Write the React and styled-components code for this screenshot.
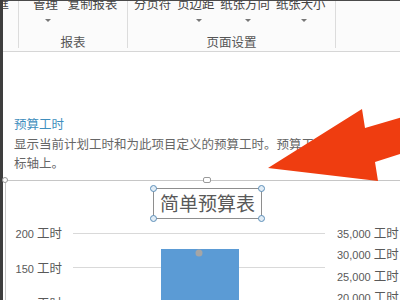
import React from "react";
import styled, { createGlobalStyle } from "styled-components";

const Global = createGlobalStyle`
  html, body { margin: 0; padding: 0; background: #fff; overflow: hidden; }
  #root { width: 400px; height: 300px; }
`;

const Page = styled.div`
  position: relative;
  display: flex;
  width: 400px;
  height: 300px;
  overflow: hidden;
  background: #fff;
  font-family: "Noto Sans CJK SC", "Noto Sans", sans-serif;
`;

const LeftStrip = styled.div`
  width: 3px;
  flex: none;
  background: #3e3e3e;
`;

const Main = styled.div`
  flex: 1;
  min-width: 0;
  display: flex;
  flex-direction: column;
`;

const Ribbon = styled.div`
  flex: none;
  display: flex;
  height: 52px;
  box-sizing: border-box;
  border-top: 1px solid #4a4a4a;
  border-bottom: 1px solid #d6d6d6;
  background: #fbfbfb;
`;

const Group = styled.div`
  width: ${(p) => p.$w}px;
  flex: none;
  display: flex;
  flex-direction: column;
  overflow: hidden;
`;

const ButtonRow = styled.div`
  display: flex;
  gap: ${(p) => p.$gap}px;
  margin-top: -4px;
  padding-left: ${(p) => p.$pl}px;
  justify-content: ${(p) => p.$justify || "flex-start"};
  padding-right: ${(p) => p.$pr || 0}px;
`;

const RibbonButton = styled.div`
  display: flex;
  flex-direction: column;
  align-items: center;
`;

const ButtonLabel = styled.span`
  font-size: 12.4px;
  line-height: 14px;
  color: #444;
  white-space: nowrap;
`;

const Caret = styled.span`
  margin-top: 8px;
  margin-left: 6px;
  width: 0;
  height: 0;
  border-left: 3px solid transparent;
  border-right: 3px solid transparent;
  border-top: 3px solid #777;
`;

const GroupLabel = styled.div`
  margin-top: auto;
  padding-bottom: 1px;
  line-height: 16px;
  font-size: 12.5px;
  color: #555;
  text-align: center;
`;

const Separator = styled.div`
  width: 1px;
  flex: none;
  background: #dcdcdc;
  margin-bottom: 3px;
`;

const Info = styled.div`
  flex: none;
  padding: 62px 0 0 11px;
`;

const InfoTitle = styled.div`
  font-size: 12.5px;
  line-height: 20px;
  color: #3f8ebd;
`;

const InfoText = styled.div`
  font-size: 12.5px;
  line-height: 19px;
  color: #666;
  white-space: nowrap;
`;

const Chart = styled.div`
  position: relative;
  flex: 1;
  min-height: 0;
  margin-top: 8px;
  margin-left: 2px;
  border-top: 1px solid #c6c6c6;
  border-left: 1px solid #c6c6c6;
`;

const FrameHandle = styled.span`
  position: absolute;
  top: -4px;
  left: ${(p) => p.$x}px;
  width: ${(p) => (p.$round ? 6 : 8)}px;
  height: 6px;
  box-sizing: border-box;
  border: 1px solid #9a9a9a;
  border-radius: ${(p) => (p.$round ? "50%" : "2px")};
  background: #fff;
`;

const TitleRow = styled.div`
  padding: 7px 0 0 147px;
`;

const TitleBox = styled.div`
  position: relative;
  display: inline-block;
  box-sizing: border-box;
  height: 31px;
  padding: 0 6px;
  border: 1px solid #8e8e8e;
  font-size: 19px;
  line-height: 28px;
  color: #595959;
  white-space: nowrap;
`;

const CornerHandle = styled.span`
  position: absolute;
  width: 7px;
  height: 7px;
  box-sizing: border-box;
  border-radius: 50%;
  border: 1px solid #5d8fb9;
  background: #e2edf6;
  ${(p) => (p.$top ? "top: -4px;" : "bottom: -4px;")}
  ${(p) => (p.$left ? "left: -4px;" : "right: -4px;")}
`;

const ChartBody = styled.div`
  display: flex;
`;

const AxisLeft = styled.div`
  width: 67px;
  flex: none;
  box-sizing: border-box;
  padding: 4px 11px 0 0;
  display: flex;
  flex-direction: column;
  align-items: flex-end;
  gap: 14px;
`;

const AxisRight = styled.div`
  flex: none;
  padding: 4px 0 0 12px;
  display: flex;
  flex-direction: column;
`;

const AxisLabel = styled.div`
  font-size: 12.5px;
  line-height: ${(p) => p.$lh}px;
  color: #595959;
  white-space: nowrap;
`;

const Num = styled.span`
  font-family: "Liberation Sans", "Noto Sans", sans-serif;
  font-size: 11px;
`;

const Plot = styled.svg`
  flex: none;
  display: block;
`;

const ArrowOverlay = styled.svg`
  position: absolute;
  left: 0;
  top: 0;
  pointer-events: none;
`;

const Label = ({ num, lh }) => (
  <AxisLabel $lh={lh}>
    <Num>{num} </Num>工时
  </AxisLabel>
);

export default function App() {
  return (
    <>
      <Global />
      <Page>
        <LeftStrip />
        <Main>
          <Ribbon>
            <Group $w={15}>
              <ButtonRow $gap={0} $pl={0} $justify="flex-end" $pr={9}>
                <RibbonButton>
                  <ButtonLabel>框</ButtonLabel>
                </RibbonButton>
              </ButtonRow>
            </Group>
            <Separator />
            <Group $w={108}>
              <ButtonRow $gap={10} $pl={14}>
                <RibbonButton>
                  <ButtonLabel>管理</ButtonLabel>
                  <Caret />
                </RibbonButton>
                <RibbonButton>
                  <ButtonLabel>复制报表</ButtonLabel>
                </RibbonButton>
              </ButtonRow>
              <GroupLabel>报表</GroupLabel>
            </Group>
            <Separator />
            <Group $w={207}>
              <ButtonRow $gap={6} $pl={6}>
                <RibbonButton>
                  <ButtonLabel>分页符</ButtonLabel>
                </RibbonButton>
                <RibbonButton>
                  <ButtonLabel>页边距</ButtonLabel>
                  <Caret />
                </RibbonButton>
                <RibbonButton>
                  <ButtonLabel>纸张方向</ButtonLabel>
                  <Caret />
                </RibbonButton>
                <RibbonButton>
                  <ButtonLabel>纸张大小</ButtonLabel>
                  <Caret />
                </RibbonButton>
              </ButtonRow>
              <GroupLabel>页面设置</GroupLabel>
            </Group>
            <Separator />
          </Ribbon>

          <Info>
            <InfoTitle>预算工时</InfoTitle>
            <InfoText>
              显示当前计划工时和为此项目定义的预算工时。预算工时显示在次坐
            </InfoText>
            <InfoText>标轴上。</InfoText>
          </Info>

          <Chart>
            <FrameHandle $round $x={-4} />
            <FrameHandle $x={197} />
            <TitleRow>
              <TitleBox>
                简单预算表
                <CornerHandle $top $left />
                <CornerHandle $top />
                <CornerHandle $left />
                <CornerHandle />
              </TitleBox>
            </TitleRow>
            <ChartBody>
              <AxisLeft>
                <Label num="200" lh={20} />
                <Label num="150" lh={20} />
                <Label num="100" lh={20} />
              </AxisLeft>
              <Plot width="252" height="90" viewBox="0 0 252 90">
                <line x1="0" y1="14.5" x2="252" y2="14.5" stroke="#d9d9d9" />
                <line x1="0" y1="48.5" x2="252" y2="48.5" stroke="#d9d9d9" />
                <line x1="0" y1="82.5" x2="252" y2="82.5" stroke="#d9d9d9" />
                <rect x="88" y="30" width="78" height="70" fill="#5b9bd5" />
                <circle cx="126" cy="34" r="3.5" fill="#a5a5a5" />
              </Plot>
              <AxisRight>
                <Label num="35,000" lh={19.3} />
                <Label num="30,000" lh={19.3} />
                <Label num="25,000" lh={19.3} />
                <Label num="20,000" lh={19.3} />
              </AxisRight>
            </ChartBody>
          </Chart>
        </Main>

        <ArrowOverlay width="400" height="300" viewBox="0 0 400 300">
          <polygon
            points="268,168 362,109 365,128 406,116 406,152 375,162 378,181"
            fill="#ef3d10"
          />
        </ArrowOverlay>
      </Page>
    </>
  );
}
